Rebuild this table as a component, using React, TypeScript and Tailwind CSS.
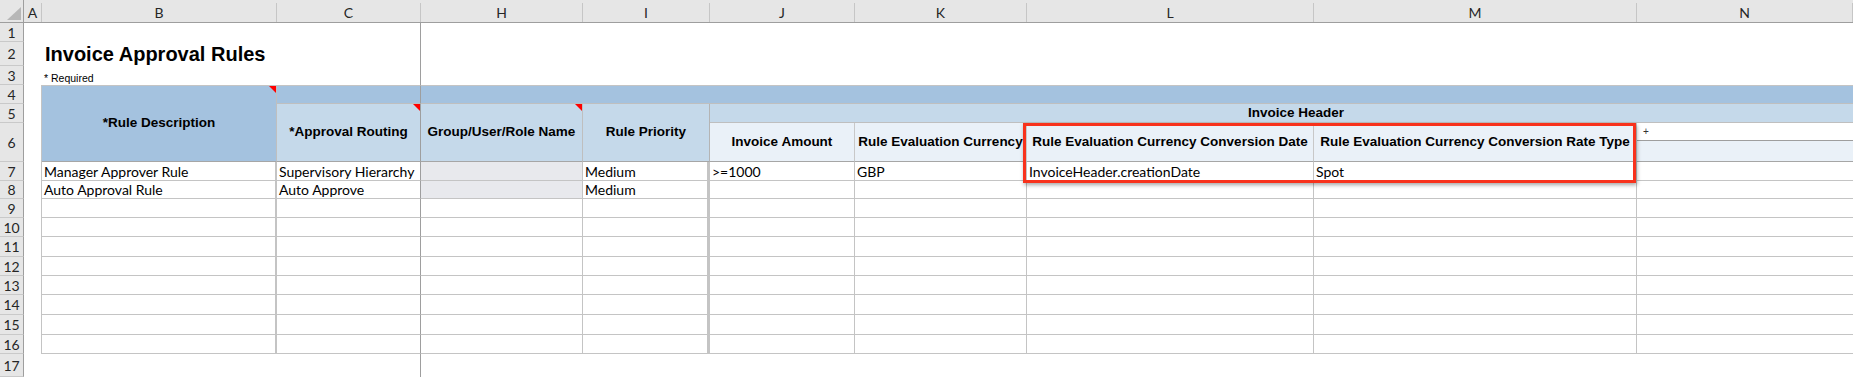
import type { ReactNode } from "react";

const headFont = "font-['Liberation_Sans',Arial,sans-serif]";
const cellFont = "font-['Lato','Open_Sans',sans-serif]";

const dataRows = [
  { n: 7, rule: "Manager Approver Rule", routing: "Supervisory Hierarchy", priority: "Medium", amount: ">=1000", currency: "GBP", convDate: "InvoiceHeader.creationDate", rateType: "Spot", gray: true },
  { n: 8, rule: "Auto Approval Rule", routing: "Auto Approve", priority: "Medium", amount: "", currency: "", convDate: "", rateType: "", gray: true },
  ...[9, 10, 11, 12, 13, 14, 15, 16].map((n) => ({
    n,
    rule: "",
    routing: "",
    priority: "",
    amount: "",
    currency: "",
    convDate: "",
    rateType: "",
    gray: false,
  })),
];

function RowNum({ n }: { n: number }) {
  return (
    <div
      className={`flex items-center justify-center border-r border-b border-r-[#9e9e9e] border-b-[#c9c9c9] bg-[#e6e6e6] text-[14px] text-[#262626] ${cellFont}`}
    >
      {n}
    </div>
  );
}

function ColHead({ label }: { label: string }) {
  return (
    <div className="flex flex-col justify-end border-b border-b-[#9e9e9e] bg-[#e6e6e6]">
      <div
        className={`flex h-[19px] items-center justify-center border-r border-r-[#c6c6c6] text-[14px] text-[#262626] ${cellFont}`}
      >
        {label}
      </div>
    </div>
  );
}

function Flag() {
  return (
    <span className="absolute top-0 right-0 h-0 w-0 border-t-[7px] border-l-[7px] border-t-[#ff0000] border-l-transparent" />
  );
}

function Cell({ children, className = "" }: { children?: ReactNode; className?: string }) {
  return (
    <div
      className={`flex items-center overflow-visible whitespace-nowrap pl-[2px] text-[14px] text-black ${cellFont} ${className}`}
    >
      {children}
    </div>
  );
}

export default function App() {
  return (
    <div className="relative h-[377px] w-[1853px] overflow-hidden bg-white">
      <div className="grid grid-cols-[24px_18px_235px_144px_162px_127px_145px_172px_287px_323px_1fr] grid-rows-[23px_19px_24px_19px_19px_19px_39px_19px_18px_19px_19px_20px_19px_19px_20px_20px_19px_23px]">
        {/* column letters */}
        <div className="relative border-r border-b border-r-[#9e9e9e] border-b-[#9e9e9e] bg-[#e6e6e6]">
          <svg className="absolute top-[7px] left-[7px]" width="14" height="13" viewBox="0 0 14 13">
            <polygon points="14,0 14,13 0,13" fill="#b7b7b7" />
          </svg>
        </div>
        {["A", "B", "C", "H", "I", "J", "K", "L", "M", "N"].map((l) => (
          <ColHead key={l} label={l} />
        ))}

        {/* row 1 */}
        <RowNum n={1} />
        <div />
        <div />
        <div className="border-r border-r-[#9e9e9e]" />
        <div className="col-span-7" />

        {/* row 2 */}
        <RowNum n={2} />
        <div />
        <div className="flex items-end overflow-visible whitespace-nowrap pl-[3px]">
          <span className={`text-[20px] leading-[23px] font-bold text-black ${headFont}`}>
            Invoice Approval Rules
          </span>
        </div>
        <div className="border-r border-r-[#9e9e9e]" />
        <div className="col-span-7" />

        {/* row 3 */}
        <RowNum n={3} />
        <div />
        <div className="flex items-end overflow-visible whitespace-nowrap pl-[2px] pb-[2px]">
          <span className={`text-[10.5px] leading-none text-black ${headFont}`}>* Required</span>
        </div>
        <div className="border-r border-r-[#9e9e9e]" />
        <div className="col-span-7" />

        {/* row 4 */}
        <RowNum n={4} />
        <div className="border-r border-r-[#c4c4c4]" />
        <div
          className={`relative row-span-3 flex items-center justify-center border-t border-r border-b border-t-[#c4c4c4] border-r-[#bfbfbf] border-b-[#a6a6a6] bg-[#a4c2df] text-[13.5px] font-bold text-black ${headFont}`}
        >
          *Rule Description
          <Flag />
        </div>
        <div className="border-t border-r border-b border-t-[#c4c4c4] border-r-[#9e9e9e] border-b-[#bfbfbf] bg-[#a4c2df]" />
        <div className="col-span-7 border-t border-b border-t-[#c4c4c4] border-b-[#bfbfbf] bg-[#a4c2df]" />

        {/* row 5 */}
        <RowNum n={5} />
        <div className="border-r border-r-[#c4c4c4]" />
        <div
          className={`relative row-span-2 flex items-center justify-center border-r border-b border-r-[#9e9e9e] border-b-[#a6a6a6] bg-[#c5d9ea] text-[13.5px] font-bold text-black ${headFont}`}
        >
          *Approval Routing
          <Flag />
        </div>
        <div
          className={`relative row-span-2 flex items-center justify-center border-r border-b border-r-[#bfbfbf] border-b-[#a6a6a6] bg-[#c5d9ea] text-[13.5px] font-bold text-black ${headFont}`}
        >
          Group/User/Role Name
          <Flag />
        </div>
        <div
          className={`row-span-2 flex items-center justify-center border-r border-b border-r-[#b4b4b4] border-b-[#a6a6a6] bg-[#c5d9ea] text-[13.5px] font-bold text-black ${headFont}`}
        >
          Rule Priority
        </div>
        <div
          className={`col-span-5 flex items-center justify-center border-b border-b-[#bfbfbf] bg-[#c5d9ea] pl-[29px] text-[13.5px] font-bold text-black ${headFont}`}
        >
          Invoice Header
        </div>

        {/* row 6 */}
        <RowNum n={6} />
        <div className="border-r border-r-[#c4c4c4]" />
        {[
          "Invoice Amount",
          "Rule Evaluation Currency",
          "Rule Evaluation Currency Conversion Date",
          "Rule Evaluation Currency Conversion Rate Type",
        ].map((h) => (
          <div
            key={h}
            className={`flex items-center justify-center whitespace-nowrap border-r border-b border-r-[#c8c8c8] border-b-[#a6a6a6] bg-[#eaf1f8] text-[13.5px] font-bold text-black ${headFont}`}
          >
            {h}
          </div>
        ))}
        <div className="flex flex-col border-b border-b-[#a6a6a6] bg-[#eaf1f8]">
          <div className={`flex h-[18px] items-center border-b border-b-[#9e9e9e] bg-white pl-[6px] text-[10px] text-[#333] ${headFont}`}>
            +
          </div>
        </div>

        {/* data rows */}
        {dataRows.map((r) => (
          <div key={r.n} className="contents">
            <RowNum n={r.n} />
            <div className="border-r border-r-[#c4c4c4]" />
            <Cell className="border-r-2 border-b border-r-[#c4c4c4] border-b-[#c4c4c4]">{r.rule}</Cell>
            <Cell className="border-r border-b border-r-[#9e9e9e] border-b-[#c4c4c4]">{r.routing}</Cell>
            <Cell className={`border-r border-b border-r-[#c4c4c4] border-b-[#c4c4c4] ${r.gray ? "bg-[#e8e9ed]" : ""}`} />
            <Cell className="border-r-[3px] border-b border-r-[#c4c4c4] border-b-[#c4c4c4]">{r.priority}</Cell>
            <Cell className="border-r border-b border-r-[#c4c4c4] border-b-[#c4c4c4]">{r.amount}</Cell>
            <Cell className="border-r border-b border-r-[#c4c4c4] border-b-[#c4c4c4]">{r.currency}</Cell>
            <Cell className="border-r border-b border-r-[#c4c4c4] border-b-[#c4c4c4]">{r.convDate}</Cell>
            <Cell className="border-r border-b border-r-[#c4c4c4] border-b-[#c4c4c4]">{r.rateType}</Cell>
            <Cell className="border-b border-b-[#c4c4c4]" />
          </div>
        ))}

        {/* row 17 */}
        <RowNum n={17} />
        <div />
        <div />
        <div className="border-r border-r-[#9e9e9e]" />
        <div className="col-span-7" />
      </div>

      {/* highlight box drawn over the sheet */}
      <div className="pointer-events-none absolute top-[123px] left-[1023px] h-[60px] w-[613px] border-[3px] border-[#f8321c] shadow-[1px_2px_4px_rgba(0,0,0,0.35)]" />
    </div>
  );
}
